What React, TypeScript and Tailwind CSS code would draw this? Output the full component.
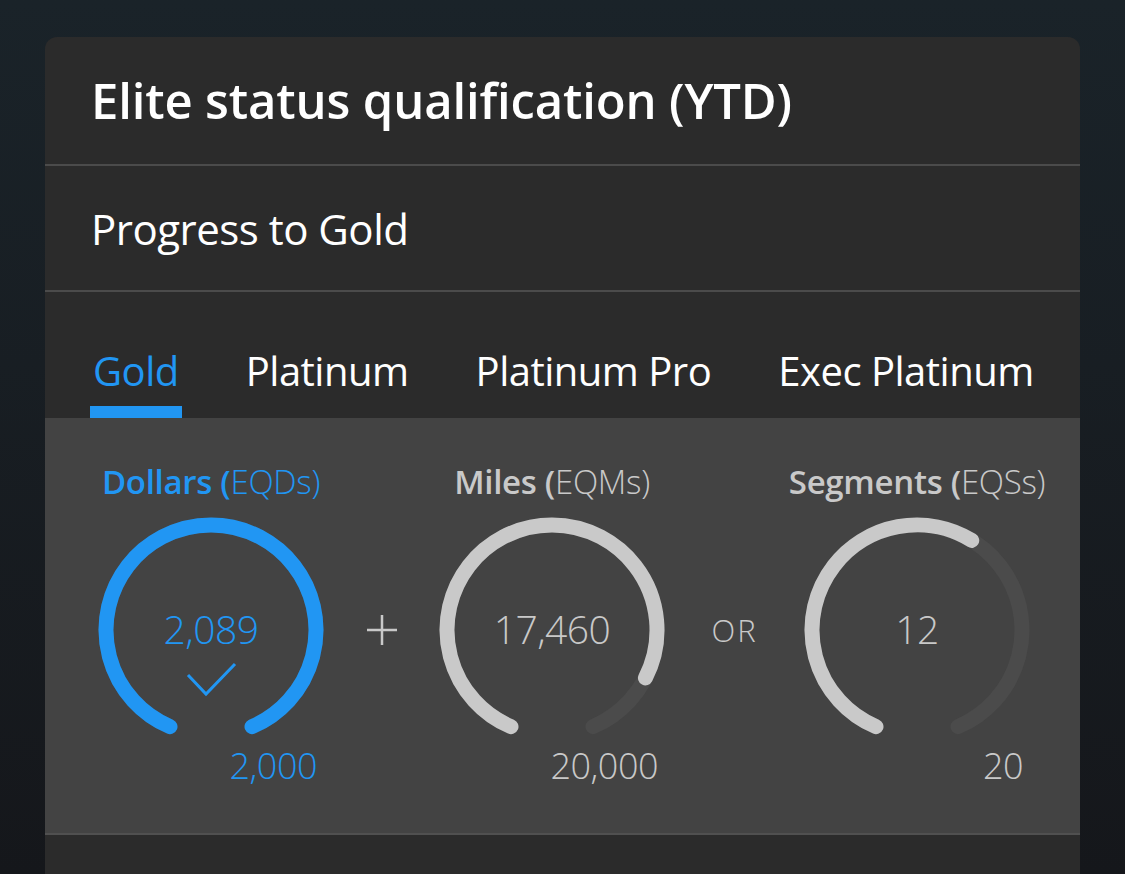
import React from 'react';

const BLUE = '#2196f3';
const GRAY = '#c9c9c9';
const TRACK = '#4b4b4b';

const CX = 113;
const CY = 113;
const R = 105;
const START = 203;
const SPAN = 314;

function pt(deg: number) {
  const a = (deg * Math.PI) / 180;
  return [CX + R * Math.sin(a), CY - R * Math.cos(a)];
}

function arcPath() {
  const [x1, y1] = pt(START);
  const [x2, y2] = pt(START + SPAN);
  return `M ${x1} ${y1} A ${R} ${R} 0 1 1 ${x2} ${y2}`;
}

type GaugeProps = {
  label: string;
  unit: string;
  value: string;
  target: string;
  pct: number;
  active?: boolean;
};

function Gauge({ label, unit, value, target, pct, active }: GaugeProps) {
  const color = active ? BLUE : GRAY;
  const d = arcPath();
  return (
    <div className="flex w-[226px] flex-col items-center">
      <div
        className="whitespace-nowrap text-[33px] leading-[40px] tracking-[-0.3px]"
        style={{ color }}
      >
        <span className="font-semibold">{label} (</span>
        <span className="font-light">{unit})</span>
      </div>
      <div className="relative mt-[15px] h-[226px] w-[226px]">
        <svg width="226" height="226" viewBox="0 0 226 226" className="absolute inset-0">
          <path d={d} fill="none" stroke={TRACK} strokeWidth="15" strokeLinecap="round" />
          <path
            d={d}
            fill="none"
            stroke={color}
            strokeWidth="15"
            strokeLinecap="round"
            pathLength={100}
            strokeDasharray={`${Math.min(pct, 100)} 200`}
          />
          {active && (
            <polyline
              points="90,158 108,177 137,147"
              fill="none"
              stroke={BLUE}
              strokeWidth="3"
            />
          )}
        </svg>
        <div
          className="absolute inset-0 flex items-center justify-center pb-[2px] text-[39px] font-light tracking-[-0.5px]"
          style={{ color }}
        >
          {value}
        </div>
      </div>
      <div
        className="mt-[3px] w-full pr-[7px] text-right text-[36px] font-light leading-[40px] tracking-[-0.5px]"
        style={{ color }}
      >
        {target}
      </div>
    </div>
  );
}

export default function App() {
  const tabs = ['Gold', 'Platinum', 'Platinum Pro', 'Exec Platinum'];

  return (
    <div
      className="h-[874px] w-full overflow-hidden bg-gradient-to-b from-[#1a2329] to-[#15171b] px-[45px] pt-[37px]"
      style={{ fontFamily: '"Open Sans", "Noto Sans", sans-serif' }}
    >
      <div className="h-full overflow-hidden rounded-t-[12px] bg-[#2b2b2b]">
        <div className="flex h-[129px] items-center border-b-2 border-[#4b4b4b] pl-[46px]">
          <h1 className="text-[49px] font-semibold tracking-[-0.15px] text-white">
            Elite status qualification (YTD)
          </h1>
        </div>

        <div className="flex h-[126px] items-center border-b-2 border-[#4b4b4b] pl-[46px]">
          <p className="text-[42px] tracking-[-0.5px] text-white">Progress to Gold</p>
        </div>

        <div className="flex h-[126px] items-end gap-[61px] pl-[45px]">
          {tabs.map((t, i) => (
            <div key={t} className="flex flex-col items-center">
              <span
                className={`px-[3px] text-[40px] tracking-[-0.5px] ${i === 0 ? 'text-[#2196f3]' : 'text-white'}`}
              >
                {t}
              </span>
              <div className={`mt-[5px] h-[12px] w-full ${i === 0 ? 'bg-[#2196f3]' : 'bg-transparent'}`} />
            </div>
          ))}
        </div>

        <div className="flex h-[417px] items-start border-b-2 border-[#505050] bg-[#434343] pl-[53px] pt-[44px]">
          <Gauge label="Dollars" unit="EQDs" value="2,089" target="2,000" pct={100} active />
          <div className="mt-[55px] flex h-[226px] w-[115px] items-center justify-center">
            <svg width="32" height="32" viewBox="0 0 32 32">
              <path d="M16 1 V31 M1 16 H31" stroke={GRAY} strokeWidth="2.5" fill="none" />
            </svg>
          </div>
          <Gauge label="Miles" unit="EQMs" value="17,460" target="20,000" pct={87.3} />
          <div className="mt-[55px] flex h-[226px] w-[139px] items-center justify-center">
            <span className="text-[31px] font-light tracking-[2px] text-[#c9c9c9]">OR</span>
          </div>
          <Gauge label="Segments" unit="EQSs" value="12" target="20" pct={60} />
        </div>
      </div>
    </div>
  );
}
